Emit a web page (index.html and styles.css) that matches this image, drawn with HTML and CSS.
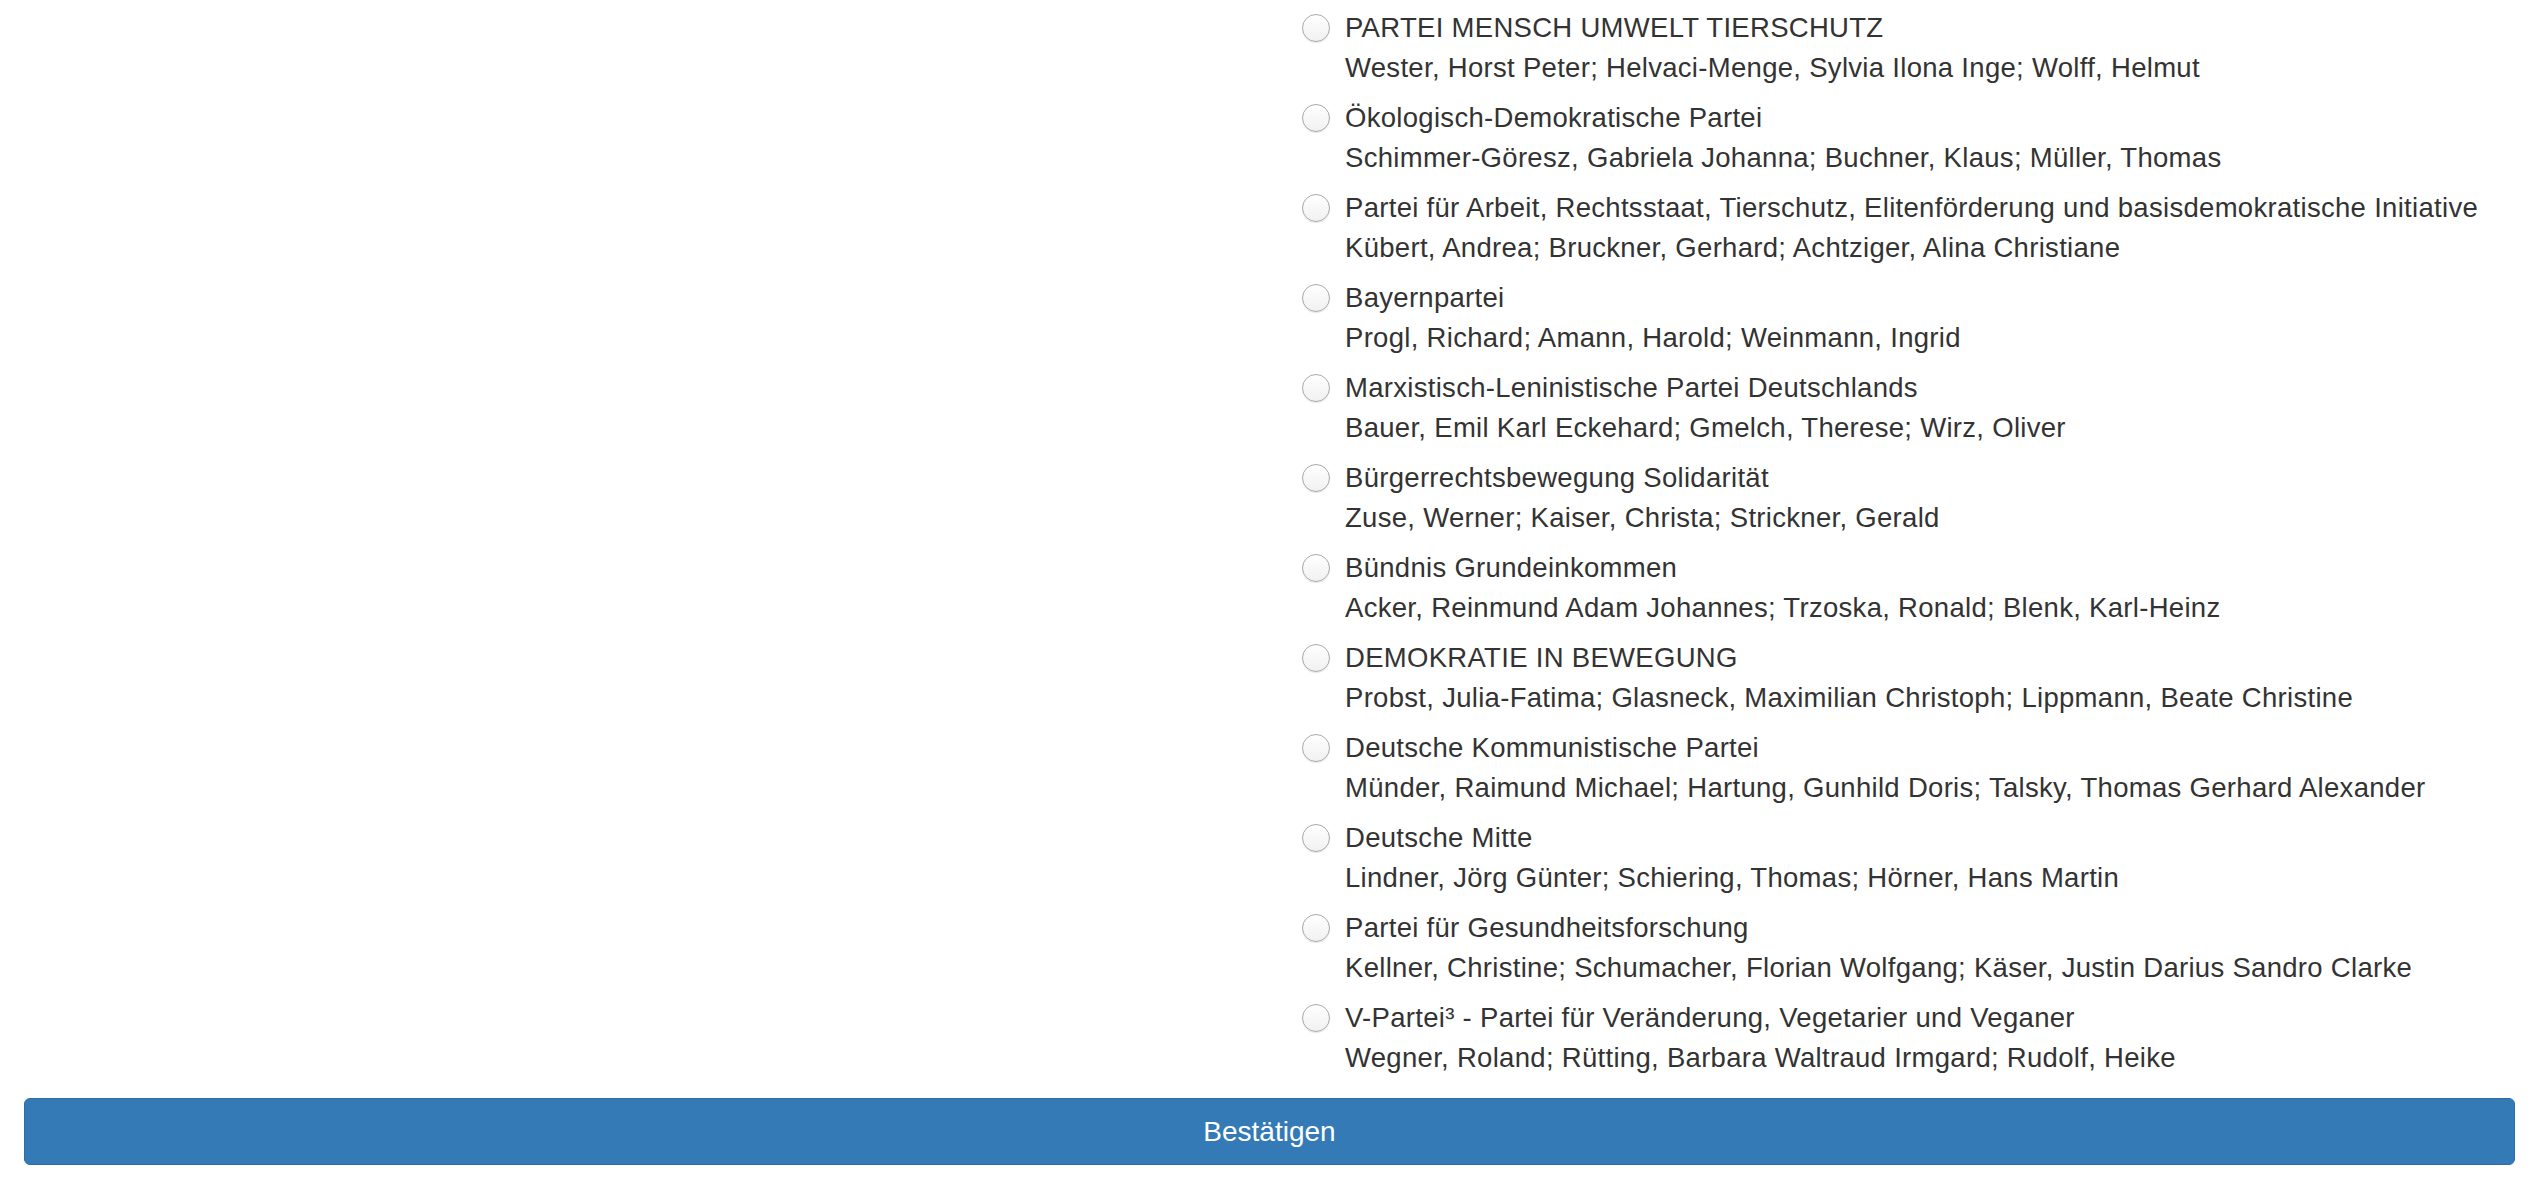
FILE: index.html
```html
<!DOCTYPE html>
<html lang="de">
<head>
<meta charset="utf-8">
<title>Wahl</title>
<link rel="stylesheet" href="styles.css">
</head>
<body>
<form class="page">
  <div class="cols">
    <div class="left"></div>
    <ul class="options">
      <li class="option"><span class="radio"></span><div class="label"><div class="party">PARTEI MENSCH UMWELT TIERSCHUTZ</div><div class="names">Wester, Horst Peter; Helvaci-Menge, Sylvia Ilona Inge; Wolff, Helmut</div></div></li>
      <li class="option"><span class="radio"></span><div class="label"><div class="party">Ökologisch-Demokratische Partei</div><div class="names">Schimmer-Göresz, Gabriela Johanna; Buchner, Klaus; Müller, Thomas</div></div></li>
      <li class="option"><span class="radio"></span><div class="label"><div class="party">Partei für Arbeit, Rechtsstaat, Tierschutz, Elitenförderung und basisdemokratische Initiative</div><div class="names">Kübert, Andrea; Bruckner, Gerhard; Achtziger, Alina Christiane</div></div></li>
      <li class="option"><span class="radio"></span><div class="label"><div class="party">Bayernpartei</div><div class="names">Progl, Richard; Amann, Harold; Weinmann, Ingrid</div></div></li>
      <li class="option"><span class="radio"></span><div class="label"><div class="party">Marxistisch-Leninistische Partei Deutschlands</div><div class="names">Bauer, Emil Karl Eckehard; Gmelch, Therese; Wirz, Oliver</div></div></li>
      <li class="option"><span class="radio"></span><div class="label"><div class="party">Bürgerrechtsbewegung Solidarität</div><div class="names">Zuse, Werner; Kaiser, Christa; Strickner, Gerald</div></div></li>
      <li class="option"><span class="radio"></span><div class="label"><div class="party">Bündnis Grundeinkommen</div><div class="names">Acker, Reinmund Adam Johannes; Trzoska, Ronald; Blenk, Karl-Heinz</div></div></li>
      <li class="option"><span class="radio"></span><div class="label"><div class="party">DEMOKRATIE IN BEWEGUNG</div><div class="names">Probst, Julia-Fatima; Glasneck, Maximilian Christoph; Lippmann, Beate Christine</div></div></li>
      <li class="option"><span class="radio"></span><div class="label"><div class="party">Deutsche Kommunistische Partei</div><div class="names">Münder, Raimund Michael; Hartung, Gunhild Doris; Talsky, Thomas Gerhard Alexander</div></div></li>
      <li class="option"><span class="radio"></span><div class="label"><div class="party">Deutsche Mitte</div><div class="names">Lindner, Jörg Günter; Schiering, Thomas; Hörner, Hans Martin</div></div></li>
      <li class="option"><span class="radio"></span><div class="label"><div class="party">Partei für Gesundheitsforschung</div><div class="names">Kellner, Christine; Schumacher, Florian Wolfgang; Käser, Justin Darius Sandro Clarke</div></div></li>
      <li class="option"><span class="radio"></span><div class="label"><div class="party">V-Partei³ - Partei für Veränderung, Vegetarier und Veganer</div><div class="names">Wegner, Roland; Rütting, Barbara Waltraud Irmgard; Rudolf, Heike</div></div></li>
    </ul>
  </div>
  <button type="button" class="btn">Bestätigen</button>
</form>
</body>
</html>
```
FILE: styles.css
```css
html, body {
  margin: 0;
  padding: 0;
  background: #fff;
}
body {
  font-family: "Liberation Sans", Arial, Helvetica, sans-serif;
  color: #333;
  font-size: 27.5px;
  line-height: 40px;
}
.page {
  display: flex;
  flex-direction: column;
}
.cols {
  display: grid;
  grid-template-columns: 1302px 1fr;
}
.options {
  list-style: none;
  margin: 0;
  padding: 8px 0 0 0;
}
.option {
  display: flex;
  align-items: flex-start;
  gap: 15px;
  margin-bottom: 10px;
}
.radio {
  flex: none;
  box-sizing: border-box;
  width: 28px;
  height: 28px;
  margin-top: 6px;
  border-radius: 50%;
  border: 1px solid #a9a9a9;
  background: linear-gradient(#ffffff, #f1f1f1);
  box-shadow: inset 0 1px 1px rgba(255,255,255,0.9), 0 1px 1px rgba(0,0,0,0.1);
}
.label {
  white-space: nowrap;
  letter-spacing: 0.3px;
}
.btn {
  box-sizing: border-box;
  margin: 10px 25px 0 24px;
  height: 67px;
  border: 1px solid #2e6da4;
  border-radius: 6px;
  background: #337ab7;
  color: #fff;
  font-family: "Liberation Sans", Arial, Helvetica, sans-serif;
  font-size: 28px;
  padding: 0;
  cursor: pointer;
}
```
